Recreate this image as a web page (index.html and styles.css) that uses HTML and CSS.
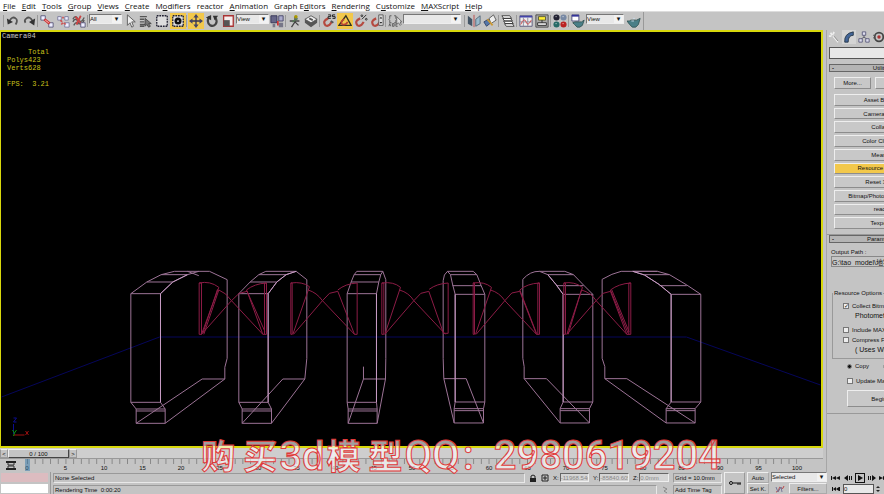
FILE: index.html
```html
<!DOCTYPE html>
<html lang="en">
<head>
  <meta charset="UTF-8" />
  <meta name="viewport" content="width=device-width, initial-scale=1.0" />
  <title>Camera04</title>
  <link rel="stylesheet" href="styles.css">
</head>
<body>
  <nav class="menu">
    <a href="#"><u>F</u>ile</a>
    <a href="#"><u>E</u>dit</a>
    <a href="#"><u>T</u>ools</a>
    <a href="#"><u>G</u>roup</a>
    <a href="#"><u>V</u>iews</a>
    <a href="#"><u>C</u>reate</a>
    <a href="#">M<u>o</u>difiers</a>
    <a href="#">reactor</a>
    <a href="#"><u>A</u>nimation</a>
    <a href="#">Graph E<u>d</u>itors</a>
    <a href="#"><u>R</u>endering</a>
    <a href="#">C<u>u</u>stomize</a>
    <a href="#"><u>M</u>AXScript</a>
    <a href="#"><u>H</u>elp</a>
  </nav>

  <div class="toolbar">
    <div class="tools">
      <i class="sep"></i>
      <button class="tool" aria-label="Undo"><svg viewBox="0 0 16 16"><path d="M4 8Q7 2 11 5Q14 7 11 12" fill="none" stroke="#555" stroke-width="2"/><path d="M1 5l1 7 6-3z" fill="#333"/></svg></button>
      <button class="tool" aria-label="Redo"><svg viewBox="0 0 16 16"><path d="M12 8Q9 2 5 5Q2 7 4 10" fill="none" stroke="#555" stroke-width="2"/><path d="M15 5l-1 8-6-4z" fill="#333"/></svg></button>
      <i class="sep"></i>
      <button class="tool" aria-label="Link"><svg viewBox="0 0 16 16"><path d="M1 2h5v5H1zM10 10h5v5h-5z" fill="#eef" stroke="#557"/><path d="M5 6l6 5" stroke="#c33" stroke-width="3"/><path d="M6 7l4 3" stroke="#fcc"/></svg></button>
      <button class="tool" aria-label="Unlink"><svg viewBox="0 0 16 16"><path d="M2 3h4v4H2zM10 10h5v5h-5zM10 3h4v4h-4z" fill="#eef" stroke="#779"/><path d="M5 7l2 2M9 10l2 2M6 12l2-2M8 5V3" stroke="#c55" stroke-width="2"/></svg></button>
      <button class="tool" aria-label="Bind to space warp"><svg viewBox="0 0 16 16"><path d="M1 6q3-6 6 0t7-2M1 9q3-6 6 0t7-2M2 13q3-6 5-1" fill="none" stroke="#555" stroke-width="1.5"/><path d="M4 3l7 9M10 2L5 12" stroke="#c44" stroke-width="2"/><path d="M10 10h5v5h-5z" fill="#eef" stroke="#557"/></svg></button>
      <i class="sep"></i>
      <span class="drop drop-s"><select aria-label="Selection filter"><option>All</option></select></span>
      <button class="tool" aria-label="Select"><svg viewBox="0 0 16 16"><path d="M5 1v12l3-3 2 5 2-1-2-5h4z" fill="#eee" stroke="#555"/></svg></button>
      <button class="tool" aria-label="Select by name"><svg viewBox="0 0 16 16"><path d="M1 3h8M1 6h5M1 9h5M1 12h6M1 14h5" stroke="#555" stroke-width="1.5"/><path d="M7 5v9l2-2 2 3 2-1-2-3h3z" fill="#777" stroke="#444"/></svg></button>
      <button class="tool" aria-label="Rectangular region"><svg viewBox="0 0 16 16"><path d="M2 2h12v12H2z" fill="#ddd" stroke="#223" stroke-width="1.5" stroke-dasharray="2 1"/></svg></button>
      <button class="tool on" aria-label="Crossing"><svg viewBox="0 0 16 16"><path d="M2 2h12v12H2z" fill="#ddd" stroke="#223" stroke-width="1.5" stroke-dasharray="2 1"/><circle cx="8" cy="8" r="4" fill="#111"/><circle cx="8" cy="8" r="1" fill="#fff"/></svg></button>
      <i class="sep"></i>
      <button class="tool on" aria-label="Move"><svg viewBox="0 0 16 16"><path d="M8 2v12M2 8h12" stroke="#335" stroke-width="1.5"/><path d="M8 0l3 4H5zM8 16l3-4H5zM0 8l4-3v6zM16 8l-4-3v6z" fill="#446"/></svg></button>
      <button class="tool" aria-label="Rotate"><svg viewBox="0 0 16 16"><path d="M5 3Q1 9 6 13Q11 15 13 10Q14 6 11 4" fill="none" stroke="#444" stroke-width="2.5"/><path d="M7 1v6L1 4zM9 2h6l-4 5z" fill="#333"/></svg></button>
      <button class="tool" aria-label="Scale"><svg viewBox="0 0 16 16"><path d="M3 2h11v12H3z" fill="#f6eeee" stroke="#a33" stroke-width="1.5"/><path d="M3 7h7v7H3z" fill="#555"/></svg></button>
      <span class="drop drop-s"><select aria-label="Coordinate system"><option>View</option></select></span>
      <button class="tool" aria-label="Pivot center"><svg viewBox="0 0 16 16"><path d="M1 2h7v8H1z" fill="#668" stroke="#335"/><path d="M10 2h5v6h-5z" fill="#aac" stroke="#446"/><path d="M3 11h3v4H3zM10 10h5v5h-5z" fill="#778"/><path d="M9 8v5" stroke="#c33" stroke-width="2"/></svg></button>
      <i class="sep"></i>
      <button class="tool" aria-label="Manipulate"><svg viewBox="0 0 16 16"><path d="M2 8h11M8 3v6l-4 6M8 9l4 4" stroke="#444" stroke-width="1.5" fill="none"/><circle cx="9" cy="3" r="2" fill="#a90"/><path d="M5 9l6-4" stroke="#575" stroke-width="2"/></svg></button>
      <button class="tool" aria-label="Keyboard shortcuts"><svg viewBox="0 0 16 16"><path d="M1 6l7-4 7 4-7 4z" fill="#eee" stroke="#555"/><path d="M1 6v4l7 5v-5zM15 6v4l-7 5v-5z" fill="#555"/><path d="M6 5l4 2" stroke="#555" stroke-width="2"/></svg></button>
      <i class="sep"></i>
      <button class="tool" aria-label="Snap 2.5"><svg viewBox="0 0 16 16"><path d="M7 5Q0 8 4 13Q8 15 11 9" fill="none" stroke="#b54a40" stroke-width="2.5"/><path d="M10 8l3 2" stroke="#555" stroke-width="2"/><path d="M7 1h3v2H7v2h3M15 1h-3v2h3v2h-3" fill="none" stroke="#111"/></svg></button>
      <button class="tool on" aria-label="Angle snap"><svg viewBox="0 0 16 16"><path d="M1 13L9 2l6 11z" fill="none" stroke="#332" stroke-width="1.5"/><path d="M7 6Q2 9 5 12Q9 13 11 9" fill="none" stroke="#b43" stroke-width="2"/></svg></button>
      <button class="tool" aria-label="Percent snap"><svg viewBox="0 0 16 16"><path d="M7 5Q0 8 4 13Q8 15 11 9" fill="none" stroke="#b54a40" stroke-width="2.5"/><path d="M9 6l5-5" stroke="#222"/><circle cx="9" cy="2" r="1" fill="none" stroke="#222"/><circle cx="14" cy="6" r="1" fill="none" stroke="#222"/></svg></button>
      <button class="tool" aria-label="Spinner snap"><svg viewBox="0 0 16 16"><path d="M7 5Q0 8 4 13Q8 15 11 9" fill="none" stroke="#b54a40" stroke-width="2.5"/><path d="M10 1h5v12h-5z" fill="#ddd" stroke="#555"/><path d="M11 5l1.500-2 1.500 2zM11 9l1.500 2 1.500-2z" fill="#222"/></svg></button>
      <i class="sep"></i>
      <button class="tool" aria-label="Named selections"><svg viewBox="0 0 16 16"><path d="M4 2H2v3L1 6l1 1v3h2M7 2h2v3l1 1-1 1v3H7M1 14l1-3 1 3M5 11v3h2v-3zM11 11H9v3h2" fill="none" stroke="#555"/><path d="M10 3v9l2-2 2 3 1-1-1-3h2z" fill="#ddd" stroke="#666"/></svg></button>
      <span class="drop drop-l"><select aria-label="Named selection sets"><option></option></select></span>
      <i class="sep sep-w"></i>
      <button class="tool" aria-label="Mirror"><svg viewBox="0 0 16 16"><path d="M1 2l5 4v8l-5-3z" fill="#456"/><path d="M15 2l-5 4v8l5-3z" fill="#9bc" stroke="#567"/><path d="M8 1v14" stroke="#b44"/></svg></button>
      <button class="tool" aria-label="Align"><svg viewBox="0 0 16 16"><path d="M1 9l5-3 3 4-5 4z" fill="#57a" stroke="#346"/><path d="M7 5l5-4 3 6-6 4z" fill="#eee" stroke="#555"/><path d="M5 6l6 7" stroke="#c93" stroke-width="2"/></svg></button>
      <i class="sep"></i>
      <button class="tool" aria-label="Layers"><svg viewBox="0 0 16 16"><path d="M4 11h9l2 3H6zM3 8h9l2 3H5zM2 5h9l2 3H4zM1 2h9l2 3H3z" fill="#fff" stroke="#333"/></svg></button>
      <i class="sep"></i>
      <button class="tool" aria-label="Curve editor"><svg viewBox="0 0 16 16"><path d="M1 2h14v12H1z" fill="#eee" stroke="#557"/><path d="M1 3h14" stroke="#44a" stroke-width="2"/><path d="M1 9h14M5 4v10M10 4v10" stroke="#889"/><path d="M2 12Q6 3 8 9t6-2" fill="none" stroke="#c44"/></svg></button>
      <button class="tool" aria-label="Schematic view"><svg viewBox="0 0 16 16"><path d="M1 1h14v14H1z" fill="#aaa" stroke="#444"/><path d="M4 3h8v4H4z" fill="#fe3" stroke="#553"/><path d="M8 7v3M3 10h10v3H3z" fill="#eee" stroke="#222"/></svg></button>
      <i class="sep"></i>
      <button class="tool" aria-label="Material editor"><svg viewBox="0 0 16 16"><circle cx="4" cy="4" r="3.500" fill="#223"/><circle cx="12" cy="4" r="3.500" fill="#7788a4"/><circle cx="4" cy="12" r="3.500" fill="#276a66"/><circle cx="12" cy="12" r="3.500" fill="#b22"/><path d="M3 3h1M11 3h1M3 11h1M11 11h1" stroke="#fff"/></svg></button>
      <i class="sep"></i>
      <button class="tool" aria-label="Render scene"><svg viewBox="0 0 16 16"><path d="M1 1h8v7H1z" fill="#fff" stroke="#447"/><path d="M1 2h8" stroke="#339" stroke-width="2"/><path d="M5 9h7l3-2-2 6-3 2H7l-3-3-2-2z" fill="#4a7f88" stroke="#355"/></svg></button>
      <span class="drop drop-m"><select aria-label="Render view"><option>View</option></select></span>
      <button class="tool gap" aria-label="Quick render"><svg viewBox="0 0 16 16"><path d="M4 7h7l4-2-2 7-3 3H6l-3-3-3-4h3z" fill="#4a7f88" stroke="#355"/><path d="M5 8h3M7 5h2" stroke="#cde"/></svg></button>
    </div>
  </div>

  <main class="work">
    <section class="left">
      <div class="viewport">
        <svg class="scene" viewBox="2 32 819 414" aria-label="Wireframe view">
          <g class="floor"><path d="M2 397L160 337H687L821 385"/></g>
          <g class="wire" transform="translate(120 260) scale(.3333)">
            <path d="M34 101H123V427H34zM34 101L82 66 125 44 165 34H270L323 59V295L316 322V357L137 490H50V447H137V490M123 101L160 66 204 44 238 34M82 66H160M125 44H204M204 34L238 47M34 427L50 447M123 427L137 447M50 453H137M316 357H248L50 490"/>
            <path d="M358 101H446V427H358zM358 101L392 66 418 44 439 34H530L562 59V295L556 357 456 490H368V447H456V490M446 101L472 66 500 44 530 34M392 66H472M418 44H500M358 427L368 447M446 427L456 447M368 453H456M556 357H490L368 490"/>
            <path d="M683 101H771V427H683zM683 101L695 66 704 44 712 34H790L799 59V295L798 357 773 490H686V447H773V490M771 101L778 66 784 44 790 34M695 66H778M704 44H784M683 427L686 447M771 427L773 447M686 453H773M798 357H732V320M732 357L686 490"/>
            <path class="bright" d="M123 101V427M446 101V427M771 101V427M123 101L160 66 204 44M446 101L472 66 500 44 530 34"/>
          </g>
          <g class="wire" transform="translate(380 260) scale(.3333)">
            <path d="M227 103H316V426H227zM227 103L219 72 213 44 204 34H281L292 44 305 77 316 103M204 34Q192 42 191 62V295L193 356H260L312 489H224L193 356M219 77H305M213 44H292M227 426L224 446V489M316 426L312 446V489M224 446H312M224 452H312"/>
            <path d="M551 103H640V426H551zM551 103L530 74 505 44 480 34H556L582 44 612 75 640 103M480 34Q452 33 430 58V295L434 320V356H501L630 489H542L434 356M530 77H612M505 44H582M551 426L542 446V489M640 426L630 446V489M542 446H630M542 452H630"/>
            <path d="M875 103H964V426H875zM875 103L840 74 795 45 760 34H834L870 44 922 75 964 103M834 34H725Q698 40 668 58V295L676 320V356H742L947 489H860L676 356M840 77H922M795 44H870M875 426L860 446V489M964 426L947 446V489M860 446H947M860 452H947"/>
            <path class="bright" d="M227 103V426M551 103V426M875 103V426M551 103L530 74 505 44M875 103L840 74 795 45 760 34"/>
          </g>
          <g class="fan" transform="translate(120 260) scale(.3333)">
            <path d="M239 69V223H246V69zQ272 62 298 82L246 223M298 90L253 223M294 88L250 220M298 90Q320 98 336 122L430 223M246 223L336 122 359 100 383 94L430 223H441V69H435V223M441 69Q405 71 381 90L436 214"/>
            <path d="M514 69V223H518V69zQ548 64 570 80L520 223M566 90Q592 98 609 122L705 223M522 223L609 122 630 100 655 94L705 223H713V69Q678 71 655 90"/>
          </g>
          <g class="fan" transform="translate(380 260) scale(.3333)">
            <path d="M7 69V223H13V69zQ42 64 63 82L16 223M60 90Q88 98 103 122L198 223M16 223L103 122 124 100 148 94L192 220H206V69Q172 71 149 88"/>
            <path d="M281 69V223H285V69zQ315 64 336 82L288 223M333 90Q360 98 376 122L471 223M290 223L376 122 397 99 421 94L471 223H480V69H475V223M480 69Q442 71 421 90L471 220"/>
            <path d="M553 69V223H558V69zQ585 64 609 82L562 223M606 90L566 223M606 90Q635 98 650 122L742 223M562 223L650 122 671 100 693 94L742 223H754V69H748V223M754 69Q718 71 693 90L746 220M697 90L749 216"/>
          </g>
          <path class="ax-z" d="M14 434V424M14 418h3l-3 4h3"/>
          <path class="ax-x" d="M14 435H25M26 431l3 4M29 431l-3 4"/>
          <path class="ax-y" d="M13 430l2 3 2-3M15 433l-1 3"/>
        </svg>
        <div class="view-name">Camera04</div>
        <pre class="stats">     Total
Polys423
Verts628

FPS:  3.21</pre>
      </div>
      <div class="slider">
        <button aria-label="Previous frame">&lt;</button>
        <button class="thumb">0 / 100</button>
        <button aria-label="Next frame">&gt;</button>
      </div>
      <div class="track">
        <button class="curve" aria-label="Open mini curve editor"><svg viewBox="0 0 10 10"><path d="M0 1h10M0 8h10" stroke="#222" stroke-width="2"/><path d="M2 2v2h6V2M2 7V5h6v2" fill="none" stroke="#333"/></svg></button>
        <div class="ruler">
          <svg class="ticks" viewBox="0 0 1001 6" preserveAspectRatio="none">
            <pattern id="tick" width="10" height="6" patternUnits="userSpaceOnUse"><rect width="1" height="6" fill="#777"/></pattern>
            <rect width="1001" height="6" fill="url(#tick)"/>
          </svg>
          <div class="frames">
            <span class="now">0</span><span>5</span><span>10</span><span>15</span><span>20</span><span>25</span><span>30</span><span>35</span><span>40</span><span>45</span><span>50</span><span>55</span><span>60</span><span>65</span><span>70</span><span>75</span><span>80</span><span>85</span><span>90</span><span>95</span><span>100</span>
          </div>
        </div>
      </div>
    </section>

    <aside class="side">
      <div class="side-in">
        <div class="tabs">
          <button aria-label="Create"><svg viewBox="0 0 14 14"><path d="M3 2l2 3M7 1L6 4M1 6h3M6 6l6 7" stroke="#eee" stroke-width="2"/><path d="M7 6l5 6" stroke="#777"/></svg></button>
          <button class="cur" aria-label="Modify"><svg viewBox="0 0 14 14"><path d="M2 13Q1 3 12 1v4Q6 5 6 13z" fill="#469" stroke="#234"/></svg></button>
          <button aria-label="Hierarchy"><svg viewBox="0 0 14 14"><path d="M7 4v4M3 10l4-3 4 3" stroke="#556" fill="none"/><path d="M5 1h4v4H5zM1 9h4v4H1zM9 9h4v4H9z" fill="#dde" stroke="#557"/></svg></button>
          <button aria-label="Motion"><svg viewBox="0 0 14 14"><circle cx="7" cy="7" r="5" fill="none" stroke="#444" stroke-width="2"/><circle cx="7" cy="7" r="2" fill="#a33"/><path d="M0 5h3M0 8h3" stroke="#555"/></svg></button>
          <button aria-label="Display"><svg viewBox="0 0 14 14"><path d="M1 2h12v9H1z" fill="#dde" stroke="#446"/></svg></button>
        </div>
        <input class="name" aria-label="Object name">
        <section class="roll">
          <h2><b>-</b>Utilities</h2>
          <div class="list">
            <div class="pair"><button>More...</button><button>Sets</button></div>
            <button>Asset Browser</button>
            <button>Camera Match</button>
            <button>Collapse</button>
            <button>Color Clipboard</button>
            <button>Measure</button>
            <button class="on">Resource Collector</button>
            <button>Reset XForm</button>
            <button>Bitmap/Photometric Paths</button>
            <button>reactor</button>
            <button>Texporter</button>
          </div>
        </section>
        <section class="roll params">
          <h2><b>-</b>Parameters</h2>
          <div class="opts">
            <label class="path" for="out">Output Path :</label>
            <input id="out" class="out" value="G:\tao_model\地铁站\">
            <fieldset>
              <legend>Resource Options</legend>
              <label><input type="checkbox" checked>Collect Bitmaps/</label>
              <p>Photometric</p>
              <label><input type="checkbox">Include MAX File</label>
              <label><input type="checkbox">Compress Files</label>
              <p>( Uses WinZip )</p>
            </fieldset>
            <div class="modes">
              <label><input type="radio" name="mode" checked>Copy</label>
              <label><input type="radio" name="mode">Move</label>
            </div>
            <label class="update"><input type="checkbox">Update Materials</label>
            <button class="begin">Begin</button>
          </div>
        </section>
      </div>
    </aside>
  </main>

  <footer class="status">
    <div class="listener">
      <input class="pink" aria-label="Macro recorder">
      <input aria-label="Listener">
    </div>
    <div class="prompt">
      <div class="line">
        <output class="well">None Selected</output>
        <button class="mini" aria-label="Lock selection"><svg viewBox="0 0 8 8"><path d="M2 4V2q2-2 4 0v2" fill="none" stroke="#222"/><path d="M1 4h6v4H1z" fill="#222"/></svg></button>
        <button class="mini" aria-label="Absolute mode"><svg viewBox="0 0 8 8"><path d="M1 1h6v6H1z" fill="none" stroke="#222"/><path d="M4 2v4M2 4h4" stroke="#222"/></svg></button>
        <label class="coord">X:<input value="-11968.54mm"></label>
        <label class="coord">Y:<input value="-85840.605mm"></label>
        <label class="coord">Z:<input value="0.0mm"></label>
        <output class="well tag">Grid = 10.0mm</output>
      </div>
      <div class="line">
        <output class="well">Rendering Time&nbsp; 0:00:20</output>
        <svg class="mini" viewBox="0 0 8 8"><path d="M2 1l4 2-3 2 3 2" fill="none" stroke="#888"/></svg>
        <button class="well tag">Add Time Tag</button>
      </div>
    </div>
    <button class="key" aria-label="Set keys"><svg viewBox="0 0 12 6"><circle cx="2" cy="3" r="1.500" fill="none" stroke="#111"/><path d="M4 3h8M9 3v2M11 3v2" stroke="#111" fill="none"/></svg></button>
    <div class="auto">
      <button>Auto</button>
      <button>Set K.</button>
    </div>
    <div class="filter">
      <span class="drop"><select aria-label="Key set"><option>Selected</option></select></span>
      <div class="line">
        <button class="tan" aria-label="Tangents"><svg viewBox="0 0 10 8"><path d="M1 7Q4 7 4 4t2-1 3-2" fill="none" stroke="#b44"/><path d="M1 2l2 5 3-5 1 5" fill="none" stroke="#779"/></svg></button>
        <button class="filters">Filters...</button>
      </div>
    </div>
    <div class="play">
      <div class="line">
        <button aria-label="Go to start"><svg viewBox="0 0 10 8"><path d="M0 2h1v4H0zM5 2v4L1 4zM9 2v4L5 4z" fill="#111"/></svg></button>
        <button aria-label="Previous frame"><svg viewBox="0 0 10 8"><path d="M5 1v6L1 4zM6 2h1v4H6zM8 2h1v4H8z" fill="#111"/></svg></button>
        <button class="run" aria-label="Play"><svg viewBox="0 0 8 8"><path d="M2 1v6l5-3z" fill="#111"/></svg></button>
        <button aria-label="Next frame"><svg viewBox="0 0 10 8"><path d="M5 1v6l4-3zM3 2h1v4H3zM1 2h1v4H1z" fill="#111"/></svg></button>
        <button aria-label="Go to end"><svg viewBox="0 0 10 8"><path d="M0 2v4l4-2zM4 2v4l4-2zM8 2h1v4H8z" fill="#111"/></svg></button>
      </div>
      <div class="line">
        <button aria-label="Key mode"><svg viewBox="0 0 10 8"><path d="M1 2h1v4H1zM5 2v4L2 4zM5 4l3-2v4zM8 2h1v4H8z" fill="#111"/></svg></button>
        <input class="frame" value="0" aria-label="Current frame">
        <svg class="spin" viewBox="0 0 5 8"><path d="M0 3l2-2 2 2zM0 5l2 2 2-2z" fill="#222"/></svg>
      </div>
    </div>
  </footer>

  <div class="overlay"><span class="han"><span>购</span><span>买</span></span><span>3d</span><span class="han"><span>模</span><span>型</span></span><span>QQ<span class="colon">：</span>2980619204</span></div>
</body>
</html>
```
FILE: styles.css
```css
* {
  box-sizing: border-box;
}
html, body {
  margin: 0;
  height: 100%;
  overflow: hidden;
}
body {
  position: relative;
  display: flex;
  flex-direction: column;
  background: #c4c4c4;
  color: #111;
  font-family: "Liberation Sans", "Noto Sans CJK SC", sans-serif;
  font-size: 6px;
  line-height: 8px;
}
button, input, select {
  margin: 0;
  padding: 0;
  border: none;
  border-radius: 0;
  background: none;
  color: inherit;
  font: inherit;
  min-width: 0;
}
svg {
  display: block;
}
.menu {
  display: flex;
  gap: 6px;
  height: 11px;
  padding-left: 3px;
  background: #fff;
  font: 8px/11px "Open Sans", sans-serif;
}
.menu a {
  color: #111;
  text-decoration: none;
  white-space: nowrap;
}
.toolbar {
  display: flex;
  height: 19px;
  border-top: 1px solid #ddd;
}
.tools {
  display: flex;
  align-items: center;
  padding: 0 1px 0 3px;
  border-right: 1px solid #999;
}
.sep {
  width: 1px;
  height: 12px;
  margin-right: 1px;
  background: #999;
}
.sep-w {
  margin: 0 1px 0 3px;
}
.tool {
  width: 16px;
  height: 16px;
  padding: 1px;
}
.tool svg {
  width: 14px;
  height: 14px;
}
.tool.gap {
  margin-left: 2px;
}
.on {
  background: #f2c84b;
}
.drop {
  position: relative;
  display: flex;
  height: 10px;
  background: #e8e8e8;
  border: 1px solid #777;
  border-right-color: #eee;
  border-bottom-color: #eee;
}
.tools .drop {
  margin-bottom: 4px;
}
.drop select {
  width: 100%;
  appearance: none;
  line-height: 8px;
}
.drop::after {
  content: "▾";
  position: absolute;
  top: 0;
  right: 0;
  width: 9px;
  height: 8px;
  background: #f2f2f2;
  color: #111;
  text-align: center;
  font: 7px/8px "DejaVu Sans", sans-serif;
  pointer-events: none;
}
.drop-s {
  width: 33px;
}
.drop-m {
  width: 38px;
}
.drop-l {
  width: 58px;
}
.work {
  display: flex;
  flex: 1;
  min-height: 0;
}
.left {
  display: flex;
  flex: 1;
  flex-direction: column;
  min-width: 0;
}
.viewport {
  position: relative;
  flex: 1;
  min-height: 0;
  background: #000;
  border: 2px solid #d8d80c;
  border-left-width: 1px;
}
.scene {
  width: 100%;
  height: 100%;
}
.scene path {
  fill: none;
  stroke-width: 1px;
  vector-effect: non-scaling-stroke;
}
.wire {
  stroke: #9c7396;
}
.wire .bright {
  stroke: #c79cc4;
}
.fan {
  stroke: #8c1c46;
}
.floor {
  stroke: #06065a;
}
.ax-z {
  stroke: #0c0c90;
}
.ax-x {
  stroke: #a01010;
}
.ax-y {
  stroke: #0c900c;
}
.view-name, .stats {
  position: absolute;
  top: 0;
  left: 1px;
  margin: 0;
  color: #c8c8c8;
  font: 7px/8px "Liberation Mono", monospace;
}
.stats {
  top: 16px;
  left: 6px;
  color: #c9c21a;
}
.slider {
  display: flex;
  height: 10px;
  padding: 1px 0 0;
  background: #cecece;
}
.slider button {
  width: 8px;
  background: #c4c4c4;
  border: 1px solid #999;
  border-top-color: #eee;
  line-height: 6px;
}
.slider .thumb {
  width: 61px;
  border-color: #eee #444 #444 #eee;
}
.track {
  display: flex;
  height: 14px;
  padding-right: 26px;
  border-top: 1px solid #999;
}
.curve {
  width: 27px;
  padding: 0 0 0 6px;
}
.curve svg {
  width: 10px;
  height: 10px;
}
.ruler {
  flex: 1;
}
.ticks {
  width: 100%;
  height: 5px;
}
.frames {
  display: flex;
  justify-content: space-between;
}
.frames span {
  display: flex;
  justify-content: center;
  width: 0;
}
.frames .now::before {
  content: "";
  position: absolute;
  width: 5px;
  height: 12px;
  margin-top: -5px;
  background: rgba(50, 120, 170, 0.5);
}
.side {
  flex: 0 0 61px;
  overflow: hidden;
  padding-left: 3px;
  background: #c4c4c4;
}
.side-in {
  width: 110px;
  height: 100%;
  border-left: 1px solid #a6a6a6;
}
.tabs {
  display: flex;
  gap: 1px;
  height: 15px;
}
.tabs button {
  width: 14px;
  height: 14px;
  padding: 1px;
}
.tabs svg {
  width: 12px;
  height: 12px;
}
.tabs .cur {
  background: #d4d4d4;
}
.name {
  display: block;
  width: 104px;
  height: 12px;
  margin: 2px 0 5px 2px;
  background: #e8e8e8;
  border: 1px solid #555;
}
.roll {
  padding-left: 2px;
}
.roll h2 {
  position: relative;
  height: 8px;
  margin: 0;
  background: #b4b4b4;
  border: 1px solid #666;
  text-align: center;
  font-size: 6px;
  font-weight: normal;
  line-height: 6px;
}
.roll h2 b {
  position: absolute;
  left: 2px;
}
.list {
  display: flex;
  flex-direction: column;
  gap: 2px;
  height: 162px;
  padding: 5px 4px 5px 5px;
}
.list button, .begin {
  background: #c8c8c8;
  border: 1px solid #8c8c8c;
  border-top-color: #eee;
  border-left-color: #eee;
  white-space: nowrap;
}
.list > button {
  flex: 1;
}
.list .on {
  background: #f2c84b;
}
.pair {
  display: grid;
  grid-template-columns: 37px 1fr;
  gap: 4px;
  height: 12px;
  margin-bottom: 3px;
}
.params {
  border-top: 1px solid #999;
  border-bottom: 1px solid #999;
}
.opts {
  padding-left: 2px;
}
.path {
  display: block;
  margin-top: 5px;
}
.out {
  display: block;
  width: 102px;
  height: 11px;
  border: 1px solid #888;
  border-right-color: #eee;
  font-size: 7px;
}
.params fieldset {
  height: 70px;
  margin: 22px 4px 0 1px;
  padding: 4px 0 0 10px;
  border: 1px solid #999;
}
.params legend {
  margin-left: -10px;
  padding: 0 1px;
}
.params fieldset label, .modes label, .update {
  display: flex;
  align-items: center;
  gap: 3px;
  height: 10px;
  white-space: nowrap;
}
.params p {
  height: 14px;
  margin: 0;
  padding-left: 12px;
  font-size: 7px;
  line-height: 10px;
}
.params input[type="checkbox"] {
  appearance: none;
  width: 6px;
  height: 6px;
  background: #eee;
  border: 1px solid #777;
}
.params input[type="checkbox"]:checked::before {
  content: "✓";
  display: block;
  font: bold 6px/4px "DejaVu Sans", sans-serif;
}
.params input[type="radio"] {
  appearance: none;
  width: 5px;
  height: 5px;
  background: #eee;
  border: 1px solid #888;
  border-radius: 50%;
}
.params input[type="radio"]:checked {
  background: #111;
}
.modes {
  display: flex;
  gap: 14px;
  padding: 2px 0 5px 16px;
}
.update {
  padding-left: 16px;
}
.begin {
  display: block;
  width: 64px;
  height: 17px;
  margin: 4px 0 6px 16px;
}
.status {
  display: flex;
  height: 22px;
  gap: 2px;
}
.listener {
  display: flex;
  flex-direction: column;
  gap: 2px;
  width: 48px;
  padding: 1px 0 0 1px;
}
.listener input {
  height: 9px;
  background: #fff;
}
.listener .pink {
  background: #dcbcc0;
}
.prompt {
  display: flex;
  flex: 1;
  flex-direction: column;
  gap: 1px;
  min-width: 0;
  border-left: 1px solid #999;
  padding-left: 2px;
}
.line {
  display: flex;
  align-items: center;
  height: 11px;
}
.prompt .line {
  gap: 4px;
  flex: none;
}
.well {
  flex: 1;
  height: 10px;
  padding-left: 1px;
  border: 1px solid #999;
  border-right-color: #e8e8e8;
  border-bottom-color: #e8e8e8;
  text-align: left;
  white-space: nowrap;
}
.tag {
  flex: 0 0 49px;
}
.mini {
  width: 8px;
  height: 8px;
}
.coord {
  display: flex;
  align-items: center;
  gap: 1px;
  width: 36px;
}
.coord input {
  flex: 1;
  height: 9px;
  border: 1px solid #666;
  border-right-color: #eee;
  border-bottom-color: #eee;
  background: #d4d4d4;
  color: #888;
}
.key {
  display: grid;
  place-items: center;
  width: 21px;
  border: 1px solid #999;
  border-top-color: #eee;
  border-left-color: #eee;
}
.key svg {
  width: 12px;
  height: 6px;
}
.auto {
  display: flex;
  flex-direction: column;
  width: 22px;
}
.auto button, .filters {
  height: 11px;
  border: 1px solid #aaa;
  border-top-color: #eee;
  border-left-color: #eee;
  white-space: nowrap;
}
.filter {
  width: 56px;
}
.filter .drop {
  height: 10px;
  margin-bottom: 1px;
}
.tan {
  width: 18px;
  padding-left: 4px;
}
.tan svg {
  width: 10px;
  height: 8px;
}
.filters {
  flex: 1;
}
.play {
  width: 55px;
  overflow: hidden;
}
.play .line {
  gap: 2px;
  padding-left: 2px;
}
.play button {
  flex: none;
  width: 10px;
}
.play svg {
  width: 10px;
  height: 8px;
}
.play .run {
  border: 1px solid #111;
}
.play .run svg {
  width: 8px;
}
.frame {
  width: 31px;
  height: 10px;
  background: #e8e8e8;
  border: 1px solid #555;
}
.play .spin {
  width: 5px;
}
.overlay {
  position: absolute;
  right: 163px;
  bottom: 14px;
  display: flex;
  align-items: center;
  gap: 2px;
  color: rgba(255, 255, 255, 0.65);
  font: 500 40px/46px Roboto, "Noto Sans CJK SC", sans-serif;
  -webkit-text-stroke: 1px #e03a3a;
  white-space: nowrap;
  pointer-events: none;
}
.han {
  display: flex;
  gap: 8px;
  font-size: 34px;
  font-weight: bold;
}
.colon {
  font-size: 34px;
}
```
